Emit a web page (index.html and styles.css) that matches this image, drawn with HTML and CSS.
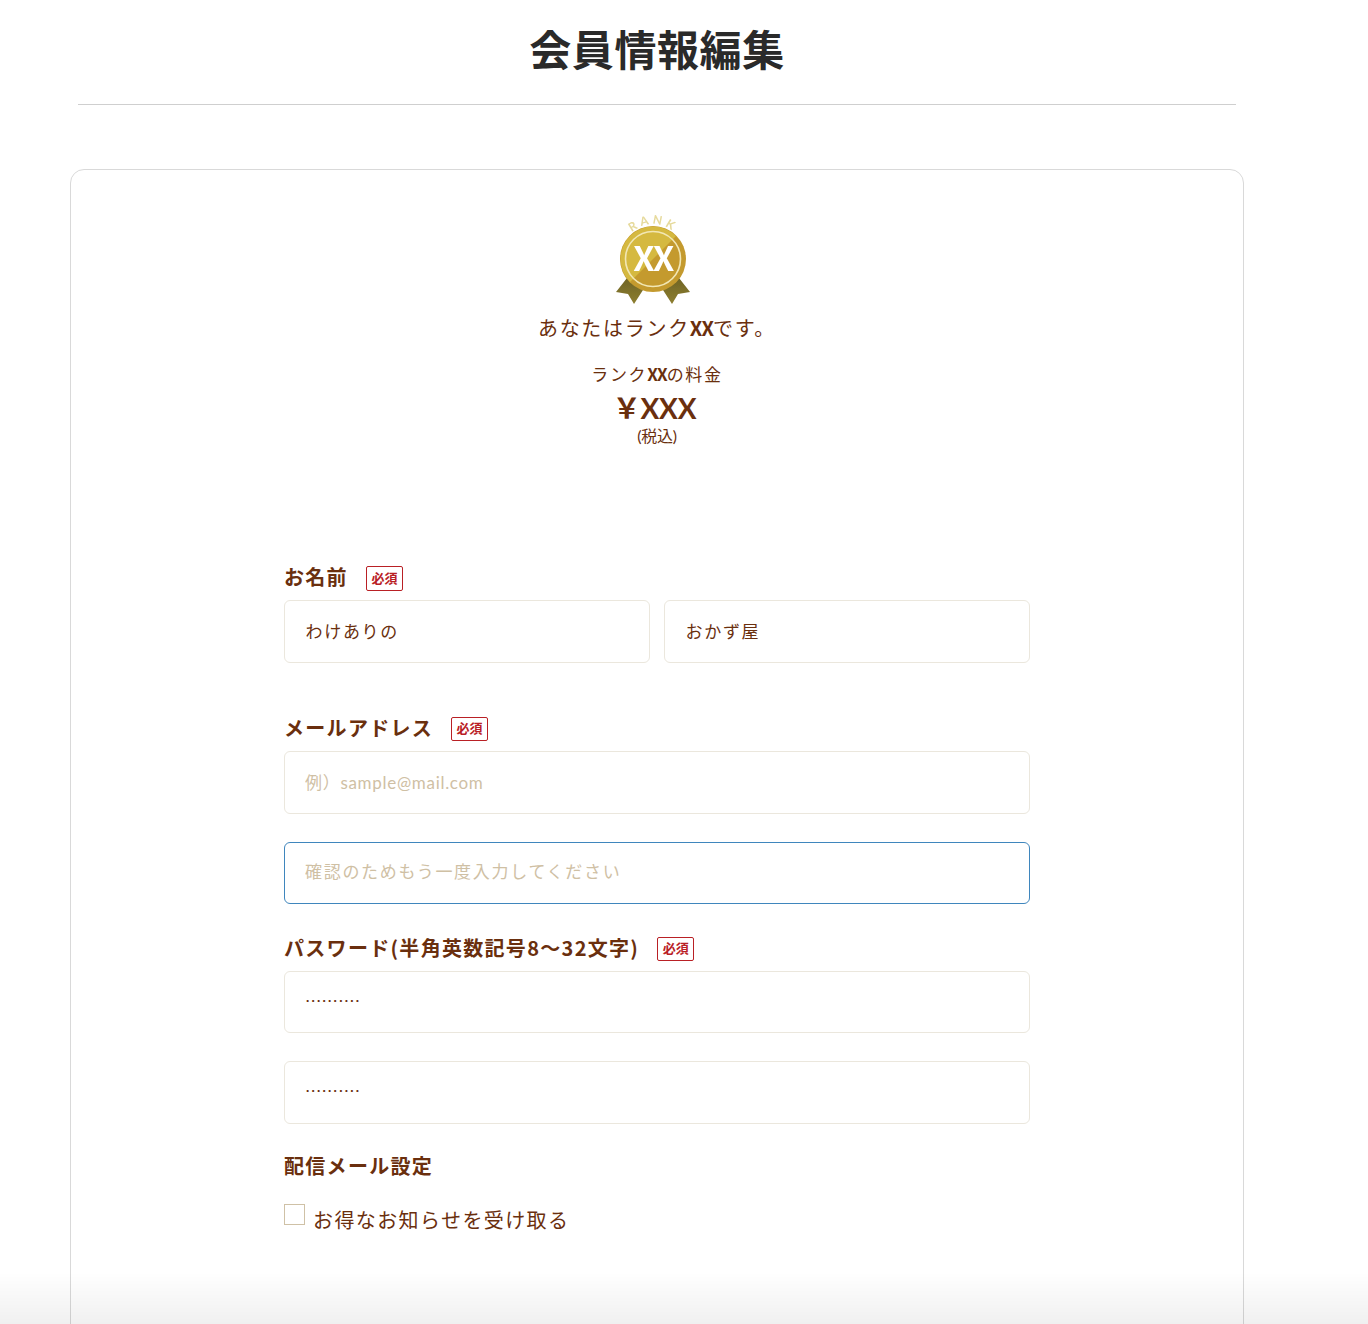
FILE: index.html
```html
<!DOCTYPE html>
<html lang="ja">
<head>
<meta charset="utf-8">
<title>会員情報編集</title>
<link rel="stylesheet" href="styles.css">
</head>
<body>
<div class="page">
  <header class="page-head">
    <h1 class="page-title">会員情報編集</h1>
  </header>
  <main class="card">
    <section class="rank">
      <svg class="medal" viewBox="0 0 88 95" width="88" height="95" aria-label="RANK XX">
        <defs>
          <path id="rank-arc" d="M6 32 Q40 -10 74 32"/>
          <linearGradient id="rib" x1="0" y1="0" x2="0" y2="1">
            <stop offset="0" stop-color="#6f6425"/>
            <stop offset="1" stop-color="#8d7e30"/>
          </linearGradient>
          <filter id="soft"><feGaussianBlur stdDeviation="0.35"/></filter>
        </defs>
        <g filter="url(#soft)">
          <polygon points="3,79 14,65 30,77 21,91 15,81" fill="url(#rib)"/>
          <polygon points="77,79 66,65 50,77 59,91 65,81" fill="url(#rib)"/>
          <circle cx="40" cy="46" r="33" fill="#c49a2f"/>
          <path d="M17 69 A32.5 32.5 0 0 1 63 23 Z" fill="#d5b93f"/>
          <circle cx="40" cy="46" r="27.5" fill="none" stroke="#f2e7b4" stroke-width="1.6"/>
          <text class="medal-rank"><textPath href="#rank-arc" startOffset="50%" text-anchor="middle">RANK</textPath></text>
          <text class="medal-xx" x="40" y="58" text-anchor="middle">XX</text>
        </g>
      </svg>
      <p class="rank-line">あなたはランク<b>XX</b>です。</p>
      <p class="fee-line">ランク<b>XX</b>の料金</p>
      <p class="fee-price">￥XXX</p>
      <p class="fee-tax">(税込)</p>
    </section>

    <form class="form">
      <div class="label-row">
        <label class="label">お名前</label><span class="req">必須</span>
      </div>
      <div class="name-row">
        <input class="field field-name" type="text" value="わけありの">
        <input class="field field-name" type="text" value="おかず屋">
      </div>

      <div class="label-row label-row-mail">
        <label class="label">メールアドレス</label><span class="req">必須</span>
      </div>
      <input class="field field-mail" type="text" placeholder="例）sample@mail.com">
      <input class="field field-active field-next" type="text" placeholder="確認のためもう一度入力してください">

      <div class="label-row label-row-pass">
        <label class="label">パスワード(半角英数記号8〜32文字)</label><span class="req">必須</span>
      </div>
      <input class="field field-dots" type="text" value="..........">
      <input class="field field-dots field-next" type="text" value="..........">

      <div class="label-row label-row-news">
        <span class="label">配信メール設定</span>
      </div>
      <label class="check">
        <span class="check-box"></span>
        <span class="check-text">お得なお知らせを受け取る</span>
      </label>
    </form>
  </main>
</div>
<div class="bottom-fade"></div>
</body>
</html>
```

FILE: styles.css
```css
* { box-sizing: border-box; }
html, body { margin: 0; padding: 0; height: 1324px; overflow: hidden; background: #fff; }
body {
  font-family: "Lato", "Noto Sans CJK JP", sans-serif;
  color: #6a2f0e;
}
.page { width: 1314px; height: 1324px; overflow: hidden; }
.page-head {
  margin: 0 78px;
  height: 105px;
  border-bottom: 1px solid #cfcfcf;
  text-align: center;
}
.page-title {
  margin: 0;
  padding-top: 18px;
  font-family: "Noto Sans CJK JP", sans-serif;
  font-size: 42px;
  line-height: 60px;
  font-weight: 700;
  letter-spacing: 0.6px;
  color: #2a2a2a;
}
.card {
  margin: 64px 70px 0;
  height: 1300px;
  padding-top: 43px;
  border: 1px solid #d9d9d9;
  border-radius: 14px;
  background: #fff;
}
.rank { text-align: center; height: 353px; }
.medal { display: block; margin: 0 auto; }
.medal-rank { font: 700 12px "Lato", sans-serif; letter-spacing: 3.2px; fill: #e6da9c; }
.medal-xx { font: 700 34px "Noto Sans CJK JP", sans-serif; fill: #fff; letter-spacing: -1.5px; }
.rank p { margin: 0; }
.rank b { font-weight: 700; }
.rank-line { font-size: 20px; line-height: 30px; letter-spacing: 1.7px; margin-top: 5px !important; font-family: "Noto Sans CJK JP", sans-serif; font-weight: 400; }
.rank-line b, .fee-line b { font-family: "Noto Sans CJK JP", sans-serif; letter-spacing: -1px; }
.fee-line { font-size: 17px; line-height: 26px; letter-spacing: 1.7px; margin-top: 18px !important; font-family: "Noto Sans CJK JP", sans-serif; font-weight: 400; }
.fee-price { font-size: 28px; line-height: 40px; font-weight: 700; margin-top: 1px !important; padding-right: 5px; letter-spacing: -0.2px; font-family: "Lato", "Noto Sans CJK JP", sans-serif; }
.fee-tax { font-size: 16px; line-height: 18px; margin-top: -1px !important; font-family: "Lato", "Noto Sans CJK JP", sans-serif; letter-spacing: -0.2px; }
.form { width: 746px; margin: 0 auto; }
.label-row { display: flex; align-items: center; height: 25px; margin-bottom: 9px; }
.label-row-mail { margin-top: 54px; margin-bottom: 9.6px; }
.label-row-pass { margin-top: 32.5px; margin-bottom: 9px; }
.label-row-news { margin-top: 31.5px; }
.label {
  font-family: "Noto Sans CJK JP", sans-serif;
  font-size: 20px;
  line-height: 25px;
  padding-bottom: 4px;
  height: 29px;
  font-weight: 700;
  letter-spacing: 1.3px;
}
.req {
  display: flex;
  align-items: center;
  justify-content: center;
  margin-left: 18px;
  width: 37px;
  height: 24.5px;
  padding-bottom: 3px;
  border: 1px solid #b92025;
  border-radius: 2px;
  background: #fff;
  color: #b92025;
  font-family: "Noto Sans CJK JP", sans-serif;
  font-size: 13px;
  font-weight: 700;
}
.name-row { display: flex; gap: 14px; }
.name-row .field { flex: 1 1 0; min-width: 0; }
.field {
  display: block;
  width: 100%;
  height: 62.5px;
  padding: 0 20px;
  border: 1px solid #ebe7dd;
  border-radius: 6px;
  background: #fff;
  outline: none;
  color: #6a2f0e;
  font-family: "Lato", "Noto Sans CJK JP", sans-serif;
  font-size: 17px;
  font-weight: 400;
  letter-spacing: 1.7px;
}
.field::placeholder { color: #cfc0a4; opacity: 1; }
.field-name { padding-bottom: 2px; padding-left: 20.5px; }
.field-mail { letter-spacing: 0.7px; }
.field-next { margin-top: 28px; }
.field-active { border-color: #3f86bd; padding-bottom: 2px; }
.field-dots { font-size: 14px; font-weight: 700; letter-spacing: 2.2px; padding-bottom: 11px; padding-left: 21px; }
.check { display: flex; align-items: flex-start; margin-top: 24px; }
.check-box { display: block; width: 21px; height: 21px; border: 1px solid #cfc1a6; background: #fff; }
.check-text {
  margin: 3px 0 0 8px;
  font-family: "Noto Sans CJK JP", sans-serif;
  font-size: 20px;
  line-height: 26px;
  font-weight: 400;
  letter-spacing: 1.4px;
}
.bottom-fade {
  position: fixed;
  left: 0;
  right: 0;
  bottom: 0;
  height: 52px;
  background: linear-gradient(to bottom, rgba(0,0,0,0), rgba(0,0,0,0.06));
  pointer-events: none;
}
```
